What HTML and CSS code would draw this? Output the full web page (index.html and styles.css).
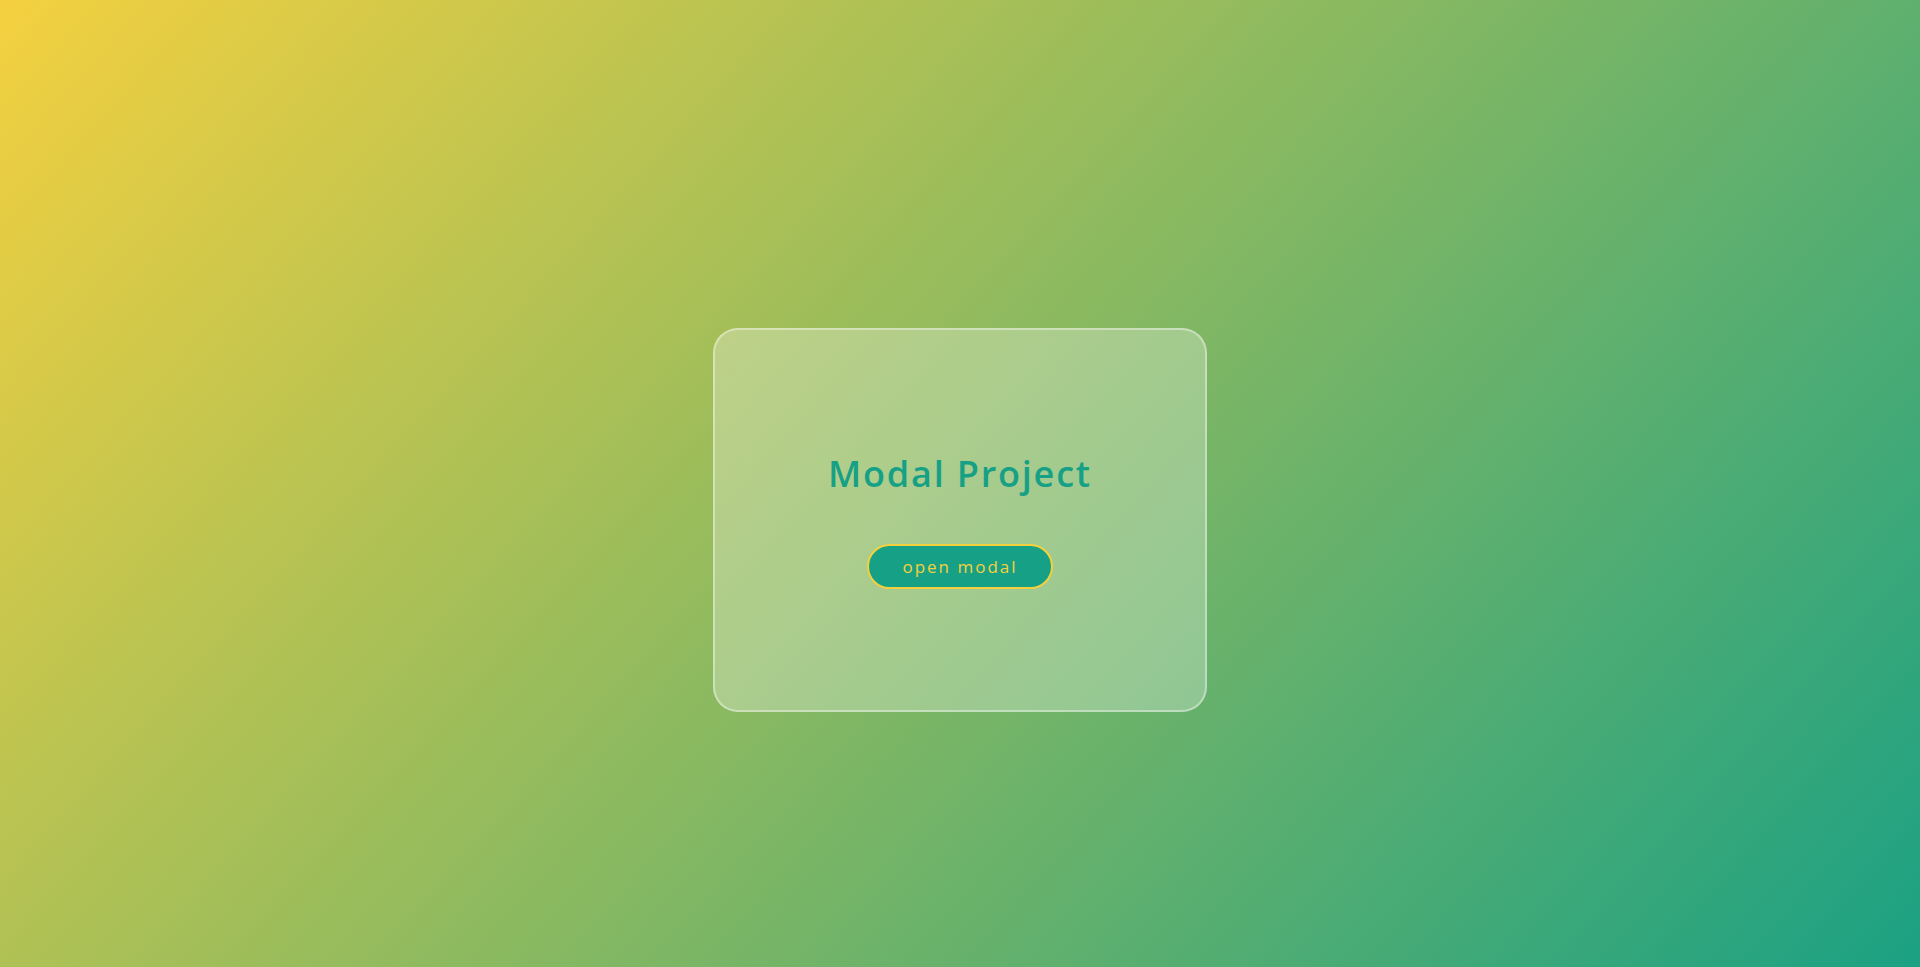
FILE: index.html
```html
<!DOCTYPE html>
<html lang="en">
<head>
<meta charset="UTF-8">
<title>Modal Project</title>
<link rel="stylesheet" href="styles.css">
</head>
<body>
<main class="page">
  <section class="card">
    <h1 class="title">Modal Project</h1>
    <button class="open-btn" type="button">open modal</button>
  </section>
</main>
</body>
</html>
```
FILE: styles.css
```css
* { box-sizing: border-box; }
html, body { margin: 0; padding: 0; }
body {
  height: 100vh;
  font-family: "Open Sans", "Noto Sans", sans-serif;
  overflow: hidden;
}
.page {
  height: 100vh;
  padding-top: 73px;
  background: linear-gradient(132deg, #f4d03f 0%, #16a085 100%);
  background-size: 100% 1040px;
  background-repeat: no-repeat;
  background-color: #2aa57c;
  display: flex;
  align-items: center;
  justify-content: center;
}
.card {
  width: 494px;
  height: 384px;
  border-radius: 25px;
  border: 2px solid rgba(255, 255, 255, 0.4);
  background: rgba(255, 255, 255, 0.28);
  display: flex;
  flex-direction: column;
  align-items: center;
  justify-content: center;
  gap: 48px;
}
.title {
  margin: 0;
  color: #16a085;
  font-size: 36px;
  font-weight: 600;
  letter-spacing: 1.8px;
  line-height: 44px;
}
.open-btn {
  width: 186px;
  height: 45px;
  border-radius: 23px;
  border: 2px solid #f4d03f;
  background: #16a085;
  color: #f4d03f;
  font-family: inherit;
  font-size: 17px;
  font-weight: 500;
  letter-spacing: 2px;
  padding: 0;
}
```
